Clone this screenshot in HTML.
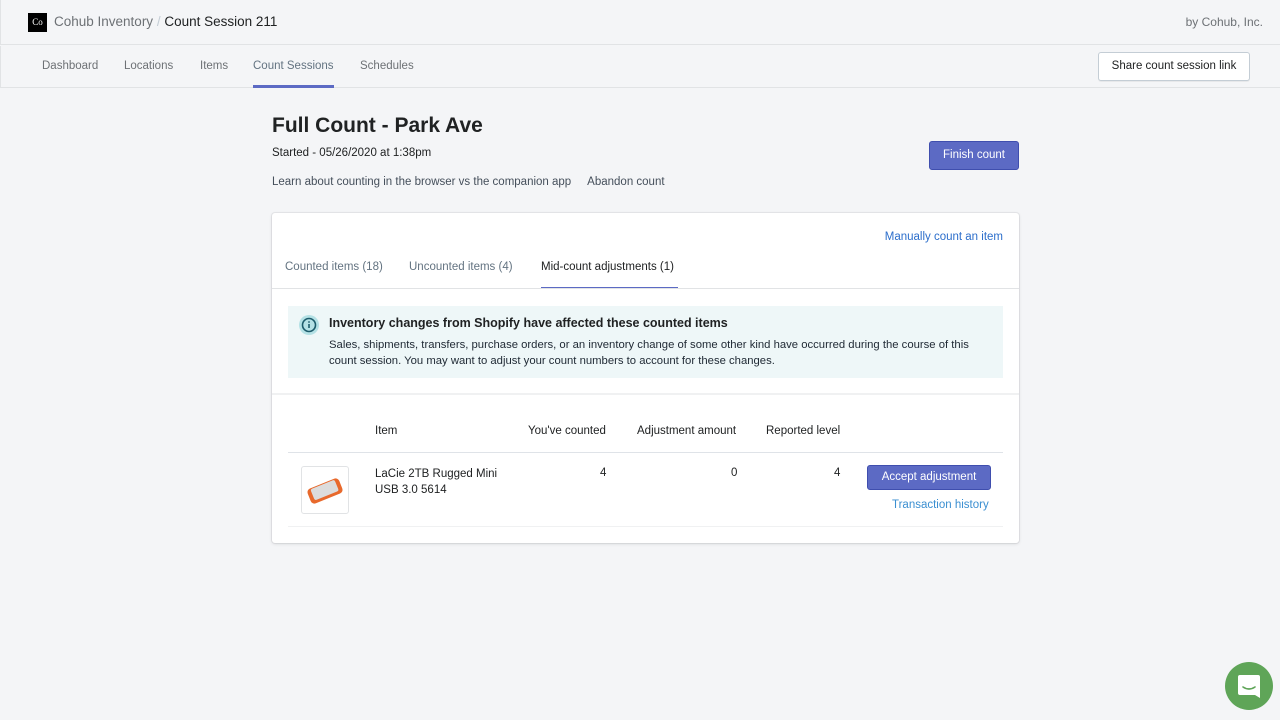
<!DOCTYPE html>
<html><head><style>
*{box-sizing:border-box;margin:0;padding:0}
body{width:1280px;height:720px;background:#f4f5f7;font-family:"Liberation Sans",sans-serif;color:#202223;position:relative;overflow:hidden;font-size:13px;white-space:nowrap}
.top{position:absolute;left:0;top:0;width:1280px;height:45px;border-bottom:1px solid #e1e3e5;border-left:1px solid #e1e3e5}
.logo{position:absolute;left:27px;top:13px;width:19px;height:19px;background:#000;color:#fff;font-family:"Liberation Serif",serif;font-size:9px;line-height:19px;text-align:center}
.crumb{position:absolute;left:53px;top:14px;font-size:13.5px;color:#6d7175}
.crumb b{font-weight:normal;color:#202223}
.by{position:absolute;right:17px;top:15px;font-size:12px;color:#6d7175}
.nav{position:absolute;left:0;top:46px;width:1280px;height:42px;border-bottom:1px solid #e1e3e5;border-left:1px solid #e1e3e5}
.nav span{position:absolute;top:14px;font-size:11.5px;color:#6d7175}
.nav .act{height:28px;border-bottom:3px solid #5c6ac4}
.share{position:absolute;right:30px;top:52px;width:152px;height:29px;border:1px solid #c4cdd5;background:#fff;border-radius:3px;font-size:11.5px;text-align:center;line-height:27px;box-shadow:0 1px 0 rgba(0,0,0,.05)}
h1{position:absolute;left:272px;top:114px;font-size:21px;font-weight:bold}
.started{position:absolute;left:272px;top:147px;font-size:11.5px}
.links{position:absolute;left:272px;top:176px;font-size:11.5px;color:#454f5b}
.finish{position:absolute;left:929px;top:141px;width:90px;height:29px;background:#5c6ac4;border:1px solid #3f4eae;color:#fff;border-radius:3px;font-size:11.5px;text-align:center;line-height:27px}
.card{position:absolute;left:272px;top:213px;width:747px;height:330px;background:#fff;border-radius:3px;box-shadow:0 0 0 1px rgba(63,63,68,.07),0 1px 3px rgba(63,63,68,.15)}
.abs{position:absolute}
.blue{color:#2c6ecb}
.tabs span{position:absolute;top:48px;font-size:11.5px;color:#637381}
.banner{position:absolute;left:16px;top:93px;width:715px;height:72px;background:#eef7f8}
.t{font-size:11.5px}
</style></head><body>
<div class="top"><div class="logo">Co</div><div class="crumb">Cohub Inventory <span style="color:#c4cdd5">/</span> <b>Count Session 211</b></div><div class="by">by Cohub, Inc.</div></div>
<div class="nav"><span style="left:41px">Dashboard</span><span style="left:123px">Locations</span><span style="left:199px">Items</span><span class="act" style="left:252px;color:#637381">Count Sessions</span><span style="left:359px">Schedules</span></div>
<div class="share">Share count session link</div>
<h1>Full Count - Park Ave</h1>
<div class="started">Started - 05/26/2020 at 1:38pm</div>
<div class="links">Learn about counting in the browser vs the companion app &nbsp;&nbsp;&nbsp;&nbsp;Abandon count</div>
<div class="finish">Finish count</div>
<div class="card">
<div class="abs blue t" style="right:16px;top:18px">Manually count an item</div>
<div class="tabs"><span style="left:13px">Counted items (18)</span><span style="left:137px">Uncounted items (4)</span><span style="left:269px;color:#202223;height:28px;border-bottom:2px solid #5c6ac4;width:137px">Mid-count adjustments (1)</span></div>
<div class="abs" style="left:0;top:75px;width:747px;border-top:1px solid #e1e3e5"></div>
<div class="banner">
<svg class="abs" style="left:10px;top:8px" width="22" height="22" viewBox="0 0 22 22"><circle cx="11" cy="11" r="10" fill="#b4e1e5"/><circle cx="11" cy="11" r="6.5" fill="none" stroke="#1c5b6b" stroke-width="1.6"/><rect x="10.2" y="10" width="1.6" height="4" fill="#1c5b6b"/><circle cx="11" cy="8" r="0.9" fill="#1c5b6b"/></svg>
<div class="abs" style="left:41px;top:10px;font-size:12.5px;font-weight:bold;color:#202223">Inventory changes from Shopify have affected these counted items</div>
<div class="abs" style="left:41px;top:31px;font-size:11.3px;line-height:16px;width:670px;color:#212b36;white-space:normal">Sales, shipments, transfers, purchase orders, or an inventory change of some other kind have occurred during the course of this count session. You may want to adjust your count numbers to account for these changes.</div>
</div>
<div class="abs" style="left:0;top:180px;width:747px;border-top:2px solid #f0f1f2"></div>
<div class="abs t" style="left:103px;top:212px">Item</div>
<div class="abs t" style="left:256px;top:212px">You've counted</div>
<div class="abs t" style="left:365px;top:212px">Adjustment amount</div>
<div class="abs t" style="left:494px;top:212px">Reported level</div>
<div class="abs" style="left:16px;top:239px;width:715px;border-top:1px solid #dfe3e8"></div>
<div class="abs" style="left:29px;top:253px;width:48px;height:48px;border:1px solid #e1e3e5;border-radius:3px">
<svg width="46" height="46" viewBox="0 0 46 46"><g transform="rotate(-22 23 24)"><rect x="6" y="16" width="34" height="16" rx="4" fill="#e8692c"/><rect x="10" y="17" width="26" height="12" rx="2" fill="#dcdcdc"/></g></svg></div>
<div class="abs t" style="left:103px;top:253px;line-height:16px">LaCie 2TB Rugged Mini<br>USB 3.0 5614</div>
<div class="abs t" style="left:328px;top:254px">4</div>
<div class="abs t" style="left:459px;top:254px">0</div>
<div class="abs t" style="left:562px;top:254px">4</div>
<div class="abs t" style="left:595px;top:252px;width:124px;height:25px;background:#5c6ac4;border:1px solid #3f4eae;border-radius:3px;color:#fff;text-align:center;line-height:23px">Accept adjustment</div>
<div class="abs t" style="left:620px;top:286px;color:#3b8fd1">Transaction history</div>
<div class="abs" style="left:16px;top:313px;width:715px;border-top:1px solid #f0f1f2"></div>
</div>
<div class="abs" style="left:1225px;top:662px;width:48px;height:48px;border-radius:50%;background:#5fa558">
<svg class="abs" style="left:12px;top:12px" width="24" height="25" viewBox="0 0 24 25"><path d="M3 1h18a2 2 0 0 1 2 2v21l-5-3H3a2 2 0 0 1-2-2V3a2 2 0 0 1 2-2z" fill="#fff"/><path d="M6 13q6 4 12 0" stroke="#5fa558" stroke-width="1.6" fill="none" stroke-linecap="round"/></svg></div>
</body></html>
